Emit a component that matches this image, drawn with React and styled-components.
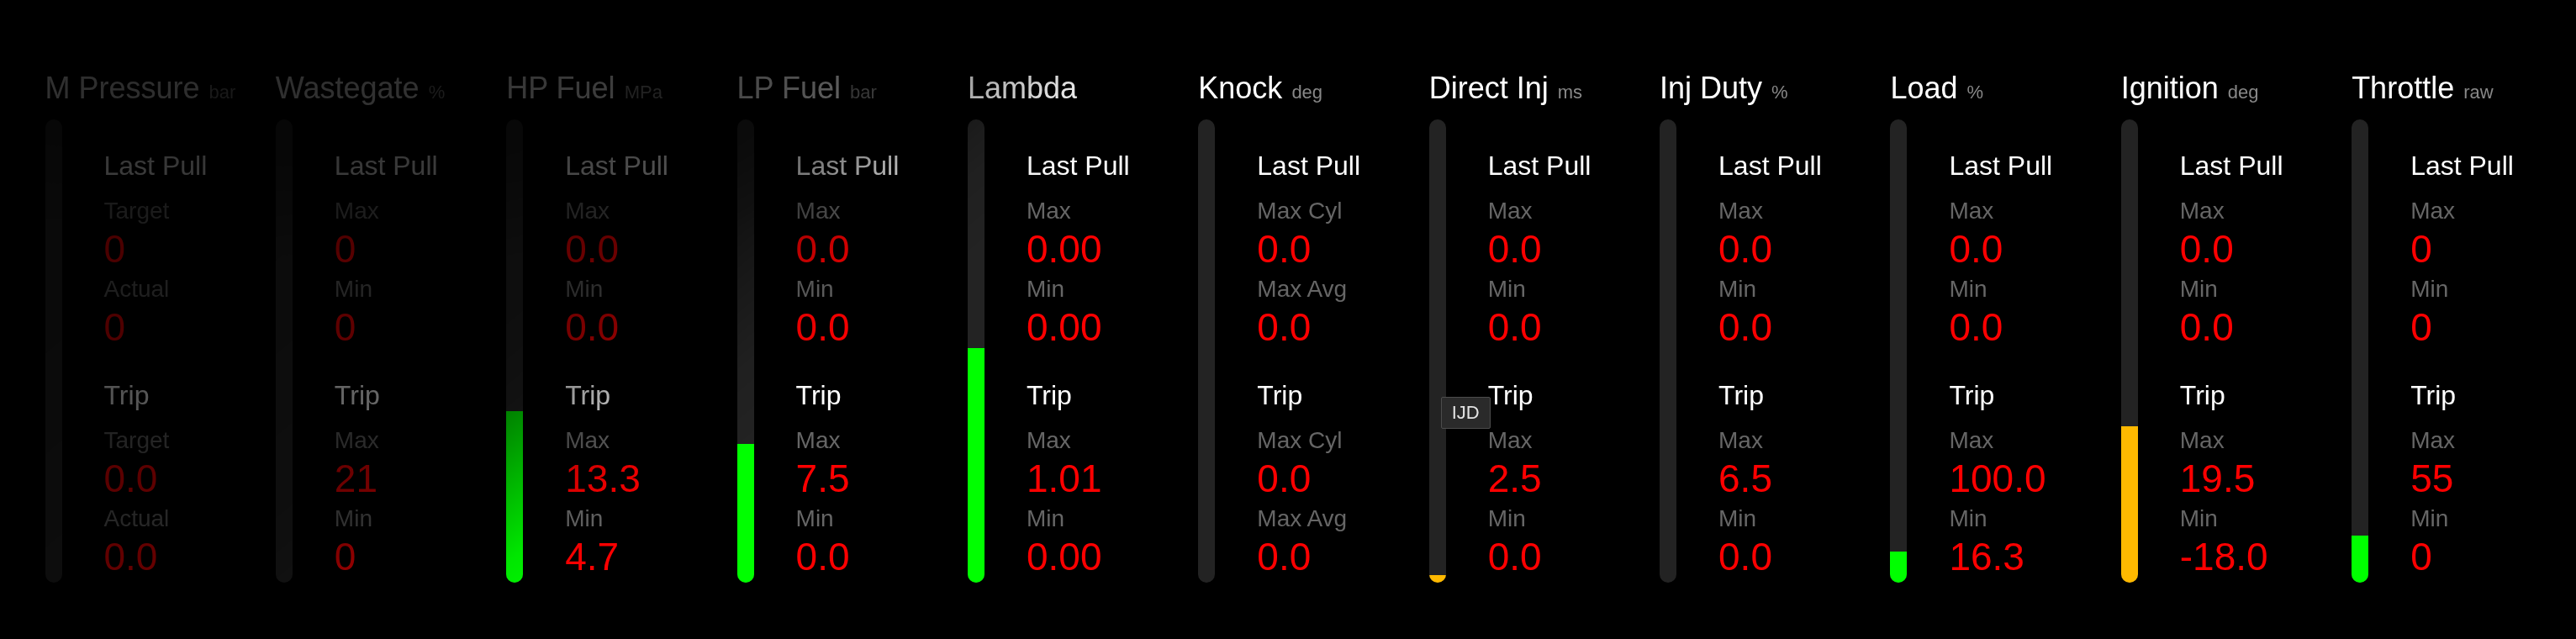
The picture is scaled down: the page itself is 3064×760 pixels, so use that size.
import React from "react";
import styled, { createGlobalStyle } from "styled-components";

const GlobalStyle = createGlobalStyle`
  html, body {
    margin: 0;
    padding: 0;
    background: #000;
  }
  body {
    font-family: "Liberation Sans", Arial, Helvetica, sans-serif;
  }
  * { box-sizing: border-box; }
`;

const fadeMask = `linear-gradient(140deg,
  rgba(0,0,0,0.22) 0%,
  rgba(0,0,0,0.31) 15.7%,
  rgba(0,0,0,0.42) 27.4%,
  rgba(0,0,0,0.5) 29.8%,
  rgba(0,0,0,0.7) 32.5%,
  rgba(0,0,0,0.9) 35.3%,
  rgba(0,0,0,1) 38.4%),
  radial-gradient(ellipse 700px 220px at 500px 90px,
  rgba(0,0,0,0.62) 0%,
  rgba(0,0,0,0.68) 50%,
  rgba(0,0,0,1) 100%)`;

const Dashboard = styled.div`
  display: grid;
  grid-template-columns: repeat(11, 1fr);
  width: 100%;
  height: 760px;
  padding: 83px 23px 0;
  background: #000;
  -webkit-mask-image: ${fadeMask};
  mask-image: ${fadeMask};
  -webkit-mask-composite: source-in;
  mask-composite: intersect;
`;

const Gauge = styled.section`
  display: flex;
  flex-direction: column;
  padding-left: 30.5px;
  min-width: 0;
`;

const Heading = styled.h2`
  margin: 0 0 15px;
  height: 44px;
  font-size: 36px;
  line-height: 44px;
  font-weight: 400;
  color: #fff;
  white-space: nowrap;
`;

const Unit = styled.span`
  margin-left: 11px;
  font-size: 22px;
  line-height: 1;
  color: #888;
`;

const Body = styled.div`
  display: flex;
  gap: 50px;
`;

const BarWrap = styled.div`
  position: relative;
  flex: 0 0 20px;
`;

const Track = styled.div`
  display: flex;
  flex-direction: column;
  justify-content: flex-end;
  width: 20px;
  height: 551px;
  border-radius: 10px;
  background: #232323;
  overflow: hidden;
`;

const Fill = styled.div`
  width: 100%;
  background: ${(p) => (p.$tone === "amber" ? "#ffb900" : "#0f0")};
`;

const Tip = styled.div`
  position: absolute;
  left: 14px;
  top: 330px;
  z-index: 2;
  display: flex;
  align-items: center;
  height: 38px;
  padding: 0 12px;
  background: #2a2a2a;
  border: 1px solid #4c4c4c;
  border-radius: 2px;
  color: #e2e2e2;
  font-size: 22px;
  white-space: nowrap;
`;

const Stats = styled.div`
  display: flex;
  flex-direction: column;
  padding-top: 35px;
  min-width: 0;
`;

const Section = styled.div`
  display: flex;
  flex-direction: column;
  gap: 3px;
  & + & {
    margin-top: 34px;
  }
`;

const SectionTitle = styled.div`
  margin-bottom: 13px;
  font-size: 32px;
  line-height: 40px;
  color: #fff;
  white-space: nowrap;
`;

const Pair = styled.div`
  display: flex;
  flex-direction: column;
`;

const Label = styled.div`
  font-size: 28px;
  line-height: 36px;
  color: #666;
  white-space: nowrap;
`;

const Value = styled.div`
  font-size: 46px;
  line-height: 54px;
  color: #f00;
  white-space: nowrap;
`;

const gauges = [
  { name: "M Pressure", unit: "bar", labels: ["Target", "Actual"], last: ["0", "0"], trip: ["0.0", "0.0"], fill: 0 },
  { name: "Wastegate", unit: "%", labels: ["Max", "Min"], last: ["0", "0"], trip: ["21", "0"], fill: 0 },
  { name: "HP Fuel", unit: "MPa", labels: ["Max", "Min"], last: ["0.0", "0.0"], trip: ["13.3", "4.7"], fill: 37 },
  { name: "LP Fuel", unit: "bar", labels: ["Max", "Min"], last: ["0.0", "0.0"], trip: ["7.5", "0.0"], fill: 29.9 },
  { name: "Lambda", unit: "", labels: ["Max", "Min"], last: ["0.00", "0.00"], trip: ["1.01", "0.00"], fill: 50.7 },
  { name: "Knock", unit: "deg", labels: ["Max Cyl", "Max Avg"], last: ["0.0", "0.0"], trip: ["0.0", "0.0"], fill: 0 },
  { name: "Direct Inj", unit: "ms", labels: ["Max", "Min"], last: ["0.0", "0.0"], trip: ["2.5", "0.0"], fill: 1.6, tone: "amber", tip: "IJD" },
  { name: "Inj Duty", unit: "%", labels: ["Max", "Min"], last: ["0.0", "0.0"], trip: ["6.5", "0.0"], fill: 0 },
  { name: "Load", unit: "%", labels: ["Max", "Min"], last: ["0.0", "0.0"], trip: ["100.0", "16.3"], fill: 6.7 },
  { name: "Ignition", unit: "deg", labels: ["Max", "Min"], last: ["0.0", "0.0"], trip: ["19.5", "-18.0"], fill: 33.7, tone: "amber" },
  { name: "Throttle", unit: "raw", labels: ["Max", "Min"], last: ["0", "0"], trip: ["55", "0"], fill: 10.1 },
];

function StatSection({ title, labels, values }) {
  return (
    <Section>
      <SectionTitle>{title}</SectionTitle>
      {labels.map((l, i) => (
        <Pair key={l}>
          <Label>{l}</Label>
          <Value>{values[i]}</Value>
        </Pair>
      ))}
    </Section>
  );
}

function GaugeColumn({ g }) {
  return (
    <Gauge>
      <Heading>
        {g.name}
        {g.unit && <Unit>{g.unit}</Unit>}
      </Heading>
      <Body>
        <BarWrap>
          <Track>
            {g.fill > 0 && <Fill $tone={g.tone} style={{ height: `${g.fill}%` }} />}
          </Track>
          {g.tip && <Tip>{g.tip}</Tip>}
        </BarWrap>
        <Stats>
          <StatSection title="Last Pull" labels={g.labels} values={g.last} />
          <StatSection title="Trip" labels={g.labels} values={g.trip} />
        </Stats>
      </Body>
    </Gauge>
  );
}

export default function App() {
  return (
    <>
      <GlobalStyle />
      <Dashboard>
        {gauges.map((g) => (
          <GaugeColumn key={g.name} g={g} />
        ))}
      </Dashboard>
    </>
  );
}
